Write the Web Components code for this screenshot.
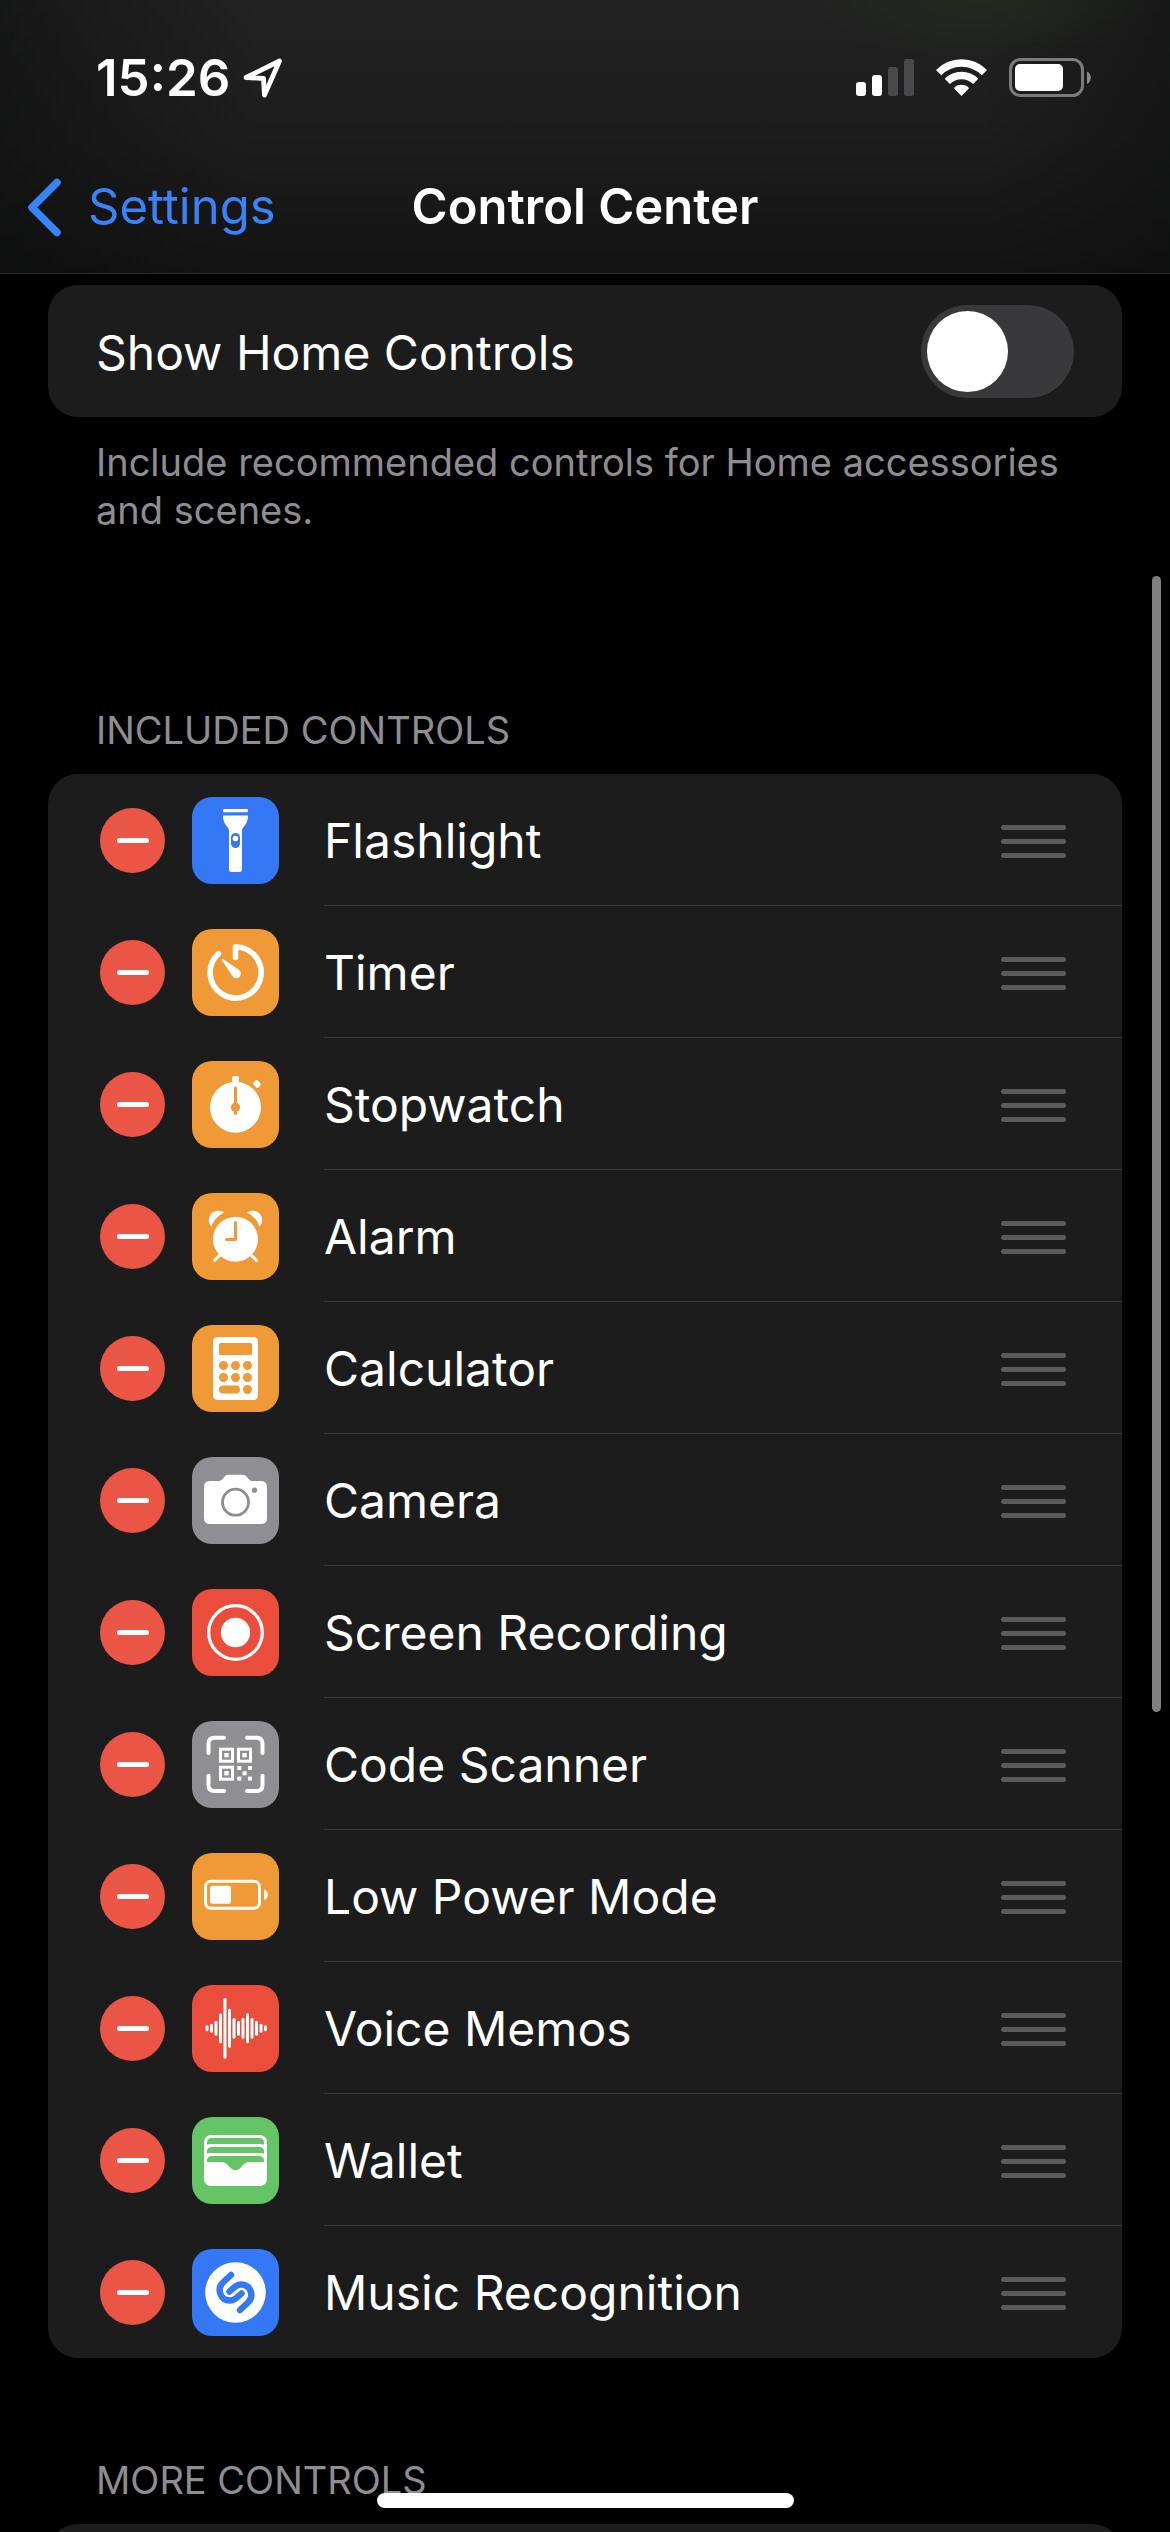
<!DOCTYPE html>
<html lang="en">
<head>
<meta charset="utf-8">
<meta name="viewport" content="width=device-width, initial-scale=1">
<title>Control Center</title>
<style>
  html, body { margin: 0; height: 100%; background: #000; }
  body {
    font-family: Inter, "Liberation Sans", sans-serif;
    color: #fff;
    --nav-size: 49px;
    --body-size: 48px;
    --note-size: 38px;
    --card: #1c1c1c;
    --muted: #8d8d92;
    --blue: #3a82f7;
    --line: #3a3a3c;
  }
</style>
</head>
<body>
<settings-screen>
  <status-bar slot="top" time="15:26"></status-bar>
  <nav-bar slot="top" back="Settings">Control Center</nav-bar>

  <settings-group>
    <toggle-row>Show Home Controls</toggle-row>
    <span slot="footer">Include recommended controls for Home accessories and scenes.</span>
  </settings-group>

  <settings-group>
    <span slot="header">INCLUDED CONTROLS</span>
    <control-row icon="flashlight">Flashlight</control-row>
    <control-row icon="timer">Timer</control-row>
    <control-row icon="stopwatch">Stopwatch</control-row>
    <control-row icon="alarm">Alarm</control-row>
    <control-row icon="calculator">Calculator</control-row>
    <control-row icon="camera">Camera</control-row>
    <control-row icon="record">Screen Recording</control-row>
    <control-row icon="code">Code Scanner</control-row>
    <control-row icon="power">Low Power Mode</control-row>
    <control-row icon="voice">Voice Memos</control-row>
    <control-row icon="wallet">Wallet</control-row>
    <control-row icon="music">Music Recognition</control-row>
  </settings-group>

  <settings-group>
    <span slot="header">MORE CONTROLS</span>
  </settings-group>
</settings-screen>

<script>
const define = (name, html, setup) => {
  const template = document.createElement('template');
  template.innerHTML = html;
  customElements.define(name, class extends HTMLElement {
    constructor() {
      super();
      this.attachShadow({ mode: 'open' }).append(template.content.cloneNode(true));
    }
    connectedCallback() { if (setup) setup(this, this.shadowRoot); }
  });
};

define('settings-screen', `
  <style>
    :host { display: flex; flex-direction: column; height: 100vh; overflow: hidden; position: relative; background: #000; }
    header {
      flex: none;
      border-bottom: 1px solid #2b2b2b;
      background:
        radial-gradient(ellipse 170px 60px at 84% 0, rgba(34, 42, 30, .9), transparent),
        linear-gradient(90deg, rgba(12, 14, 13, .55), transparent 22%, transparent 84%, rgba(12, 14, 13, .5)),
        linear-gradient(#222, #1c1d1c 50%, #131313);
    }
    main { flex: 1; min-height: 0; overflow: hidden; display: flex; flex-direction: column; gap: 98px; padding: 11px 48px 0; }
    .scroll { position: absolute; right: 9px; top: 576px; width: 9px; height: 1136px; border-radius: 5px; background: #808080; }
    .home { position: absolute; left: 50%; bottom: 24px; width: 417px; height: 15px; margin-left: -208px; border-radius: 8px; background: #fff; }
  </style>
  <header><slot name="top"></slot></header>
  <main><slot></slot></main>
  <div class="scroll"></div>
  <div class="home"></div>`);

define('status-bar', `
  <style>
    :host { display: flex; align-items: center; justify-content: space-between; padding: 48px 78px 0 96px; height: 60px; }
    .left, .right { display: flex; align-items: center; }
    .left { gap: 12px; }
    .right { gap: 22px; }
    time { font-size: 51px; font-weight: 600; line-height: 60px; }
    svg { display: block; }
  </style>
  <div class="left">
    <time></time>
    <svg width="42" height="42" viewBox="0 0 42 42" fill="none" stroke="#fff" stroke-width="4.8" stroke-linejoin="round"><path d="M4 20.500 37.500 4 22.500 38 21.500 21.500z"/></svg>
  </div>
  <div class="right">
    <svg width="58" height="38" viewBox="0 0 58 38" fill="#fff"><rect y="23" width="10" height="14" rx="3"/><rect x="16" y="16" width="10" height="21" rx="3"/><g fill="#4a4a4c"><rect x="32" y="8" width="10" height="29" rx="3"/><rect x="48" width="10" height="37" rx="3"/></g></svg>
    <svg width="51" height="38" viewBox="0 0 51 38" fill="none" stroke="#fff" stroke-width="7.4"><path d="M2.6 13.6C15.5 .7 35.5 .7 48.400 13.600"/><path d="M11.300 22.300C19.300 14.500 31.700 14.500 39.700 22.300"/><path d="M25.500 37 18.600 29.900C18 29.300 18 28.700 18.700 28.200 22.600 25 28.400 25 32.300 28.200 33 28.700 33 29.300 32.400 29.900z" fill="#fff" stroke="none"/></svg>
    <svg width="83" height="40" viewBox="0 0 83 40"><rect x="1.500" y="1.500" width="72" height="36" rx="10" fill="none" stroke="#7b7b7c" stroke-width="3"/><rect x="6" y="6" width="48" height="27" rx="5" fill="#fff"/><path d="M78 13.500C83 15.500 83 24 78 26z" fill="#8a8a8a"/></svg>
  </div>`, (host, root) => { root.querySelector('time').textContent = host.getAttribute('time'); });

define('nav-bar', `
  <style>
    :host { display: grid; grid-template-columns: 1fr auto 1fr; align-items: center; height: 132px; padding: 33px 27px 0; }
    a { display: flex; align-items: center; gap: 26px; color: var(--blue); text-decoration: none; font-size: var(--nav-size); line-height: 60px; }
    h1 { margin: 0; font-size: var(--nav-size); font-weight: 600; line-height: 60px; }
    svg { display: block; }
  </style>
  <a href="#settings"><svg width="35" height="60" viewBox="0 0 35 60" fill="none" stroke="currentColor" stroke-width="7.500" stroke-linecap="round" stroke-linejoin="round"><path d="M30 5.500 5 30.500 30 55.500"/></svg><span></span></a>
  <h1><slot></slot></h1>`, (host, root) => { root.querySelector('span').textContent = host.getAttribute('back'); });

define('settings-group', `
  <style>
    :host { display: flex; flex-direction: column; flex: none; }
    .header, .footer { font-size: var(--note-size); line-height: 48px; color: var(--muted); padding: 0 48px; }
    .header { padding-bottom: 20px; }
    .footer { padding-top: 21px; padding-bottom: 74px; }
    .card { background: var(--card); border-radius: 30px; min-height: 132px; overflow: hidden; }
    [hidden] { display: none; }
  </style>
  <div class="header"><slot name="header"></slot></div>
  <div class="card"><slot></slot></div>
  <div class="footer"><slot name="footer"></slot></div>`, (host, root) => {
    for (const part of ['header', 'footer'])
      root.querySelector('.' + part).hidden = !host.querySelector('[slot=' + part + ']');
  });

define('toggle-row', `
  <style>
    :host { display: flex; align-items: center; justify-content: space-between; height: 132px; padding: 0 48px; font-size: var(--body-size); }
    label { flex: 1; line-height: 60px; padding-top: 3px; }
    input { appearance: none; margin: 0; padding: 6px; width: 153px; height: 93px; border-radius: 47px; background: #39393b; display: flex; box-sizing: border-box; }
    input::before { content: ""; width: 81px; height: 81px; border-radius: 50%; background: #fff; }
    input:checked { background: #65c466; justify-content: flex-end; }
  </style>
  <label for="switch"><slot></slot></label>
  <input id="switch" type="checkbox" role="switch" aria-label="Show Home Controls">`);

const bars = [6, 9, 15, 30, 61, 39, 21, 15, 21, 30, 21, 15, 9, 6]
  .map((h, i) => `<rect x="${13.5 + i * 4.5}" y="${43.3 - h / 2}" width="3" height="${h}" rx="1.5"/>`).join('');
const finder = (x, y) => `<rect x="${x + 1.5}" y="${y + 1.5}" width="12" height="12" fill="none" stroke="#fff" stroke-width="3"/><rect x="${x + 5.3}" y="${y + 5.3}" width="4.4" height="4.400"/>`;
const dot = (x, y) => `<rect x="${x}" y="${y}" width="4" height="4"/>`;
const swirl = '<path d="M39 26 31.500 33C24 40 28.500 51.500 38 51.500 41.500 51.500 43.500 50 49.500 44.500"/>';

const ICONS = {
  flashlight: ['#3478f6', `<rect x="31" y="12" width="25" height="3.300" rx="1"/><path d="M31 18.500H56C56 24.500 54 27 51.500 30 50.300 31.500 50 32.500 50 34V72.500Q50 75 47.500 75H39.500Q37 75 37 72.500V34C37 32.500 36.700 31.500 35.500 30 33 27 31 24.500 31 18.500Z"/><rect x="39" y="36" width="9" height="15" rx="4.500" fill="var(--tile)"/><circle cx="43.500" cy="41.500" r="2.800"/>`],
  timer: ['#f09a37', `<path d="M43.500 28.500V18A25.500 25.500 0 1 1 26.500 24.600" fill="none" stroke="#fff" stroke-width="5.600" stroke-linecap="round" stroke-linejoin="round"/><path d="M30 31.200Q29.800 29.800 31.200 30L46.400 40.600A4.600 4.600 0 1 1 40.200 46.800Z"/>`],
  stopwatch: ['#f09a37', `<circle cx="43.500" cy="46.300" r="25.500"/><rect x="40" y="15" width="7" height="9" rx="2"/><rect x="61.500" y="20" width="7" height="6" rx="2" transform="rotate(45 65 23)"/><g fill="var(--tile)"><rect x="42" y="25.500" width="3" height="28.500" rx="1.500"/><circle cx="43.500" cy="46.300" r="4.600"/></g>`],
  alarm: ['#f09a37', `<circle cx="43.500" cy="46.200" r="22.500"/><path d="M19.600 33.800C13.500 27 18.500 17.700 26 17.700 28.500 17.700 30.500 18.300 32.300 19.500Q26.500 22 23.500 26 20.500 30 19.600 33.800Z"/><path d="M67.400 33.800C73.500 27 68.500 17.700 61 17.700 58.500 17.700 56.500 18.300 54.700 19.500Q60.500 22 63.500 26 66.500 30 67.400 33.800Z"/><path d="M28 62 22.500 67.300M59 62 64.500 67.300" stroke="#fff" stroke-width="3" stroke-linecap="round"/><path d="M43.500 29.500V46.500H34.500" fill="none" stroke="var(--tile)" stroke-width="3" stroke-linecap="round" stroke-linejoin="round"/>`],
  calculator: ['#f09a37', `<rect x="21" y="12" width="45" height="63" rx="4.500"/><g fill="var(--tile)"><rect x="27" y="18" width="33" height="12" rx="1.500"/><circle cx="31.500" cy="40.500" r="4.500"/><circle cx="43.500" cy="40.500" r="4.500"/><circle cx="55.500" cy="40.500" r="4.500"/><circle cx="31.500" cy="52.500" r="4.500"/><circle cx="43.500" cy="52.500" r="4.500"/><circle cx="55.500" cy="52.500" r="4.500"/><rect x="27" y="60.500" width="21" height="8" rx="4"/><circle cx="55.500" cy="64.500" r="4.500"/></g>`],
  camera: ['#8e8e93', `<path d="M18 24H27Q29 24 30.500 22L32.500 19.500Q34 17.800 36 17.800H51Q53 17.800 54.500 19.500L56.500 22Q58 24 60 24H69Q75 24 75 30V61Q75 67 69 67H18Q12 67 12 61V30Q12 24 18 24Z"/><circle cx="43.500" cy="45.200" r="13" fill="none" stroke="var(--tile)" stroke-width="2.800"/><circle cx="62.500" cy="33.200" r="2.600" fill="var(--tile)"/>`],
  record: ['#eb4d3d', `<circle cx="43.500" cy="43.500" r="26.800" fill="none" stroke="#fff" stroke-width="3.300"/><circle cx="43.500" cy="43.500" r="14.700"/>`],
  code: ['#8e8e93', `<path d="M32 16.700H22.500Q16.500 16.700 16.500 22.700V32M55 16.700H64.500Q70.500 16.700 70.500 22.700V32M32 70H22.500Q16.500 70 16.500 64V54.700M55 70H64.500Q70.500 70 70.500 64V54.700" fill="none" stroke="#fff" stroke-width="4" stroke-linecap="round"/>${finder(27, 26.7)}${finder(45, 26.7)}${finder(27, 44.7)}${dot(45.300, 45)}${dot(56, 45)}${dot(50.600, 50.300)}${dot(45.300, 55.600)}${dot(56, 55.600)}`],
  power: ['#f09a37', `<rect x="13.500" y="28.300" width="54" height="27" rx="5.500" fill="none" stroke="#fff" stroke-width="3"/><rect x="18" y="32.800" width="21" height="18" rx="2.500"/><path d="M72 36.500C77 38 77 45.500 72 47Z"/>`],
  voice: ['#eb4d3d', bars],
  wallet: ['#65c466', `<rect x="12" y="18" width="63" height="51" rx="7"/><g fill="var(--tile)"><path d="M15 27V26Q15 21 20 21H67Q72 21 72 26V27.800Q70.500 27 68 27H19Q16.500 27 15 27.800Z"/><path d="M15 36.800V34Q15.500 30 20 30H67Q71.500 30 72 34V36.800Q70.500 36 68 36H19Q16.500 36 15 36.800Z"/><path d="M15 45V43Q15.500 39 20 39H67Q71.500 39 72 43V45H58C50 45 50 53 43.500 53S37 45 29 45Z"/></g>`],
  music: ['#3478f6', `<circle cx="43.500" cy="43.500" r="30.300"/><g fill="none" stroke="var(--tile)" stroke-width="6.400" stroke-linecap="round" stroke-linejoin="round">${swirl}<g transform="rotate(180 43.500 43.500)">${swirl}</g></g>`]
};

define('control-icon', `
  <style>
    :host { display: block; flex: none; width: 87px; height: 87px; border-radius: 20px; background: var(--tile); }
    svg { display: block; }
  </style>
  <svg width="87" height="87" viewBox="0 0 87 87" fill="#fff" aria-hidden="true"></svg>`, (host, root) => {
    const [color, shapes] = ICONS[host.getAttribute('name')];
    host.style.setProperty('--tile', color);
    root.querySelector('svg').innerHTML = shapes;
  });

define('control-row', `
  <style>
    :host { display: flex; align-items: center; height: 132px; padding-left: 52px; font-size: var(--body-size); }
    button { border: 0; padding: 0; background: none; display: flex; align-items: center; justify-content: center; flex: none; }
    .remove { width: 65px; height: 65px; border-radius: 50%; background: #eb5545; margin-right: 27px; }
    .remove::before { content: ""; width: 32px; height: 5px; border-radius: 3px; background: #fff; }
    .body { flex: 1; display: flex; align-items: center; justify-content: space-between; align-self: stretch; margin-left: 45px; padding-right: 56px; border-bottom: 1px solid var(--line); }
    :host(:last-of-type) .body { border-color: transparent; }
    .name { line-height: 60px; padding-top: 3px; }
    .drag { flex-direction: column; gap: 9px; width: 65px; padding-top: 3px; }
    .drag i { width: 65px; height: 5px; border-radius: 3px; background: #5b5b5d; }
  </style>
  <button class="remove" type="button"></button>
  <div class="body">
    <span class="name"><slot></slot></span>
    <button class="drag" type="button"><i></i><i></i><i></i></button>
  </div>`, (host, root) => {
    const icon = document.createElement('control-icon');
    icon.setAttribute('name', host.getAttribute('icon'));
    root.querySelector('.remove').after(icon);
    root.querySelector('.remove').setAttribute('aria-label', 'Remove ' + host.textContent);
    root.querySelector('.drag').setAttribute('aria-label', 'Reorder ' + host.textContent);
  });
</script>
</body>
</html>
